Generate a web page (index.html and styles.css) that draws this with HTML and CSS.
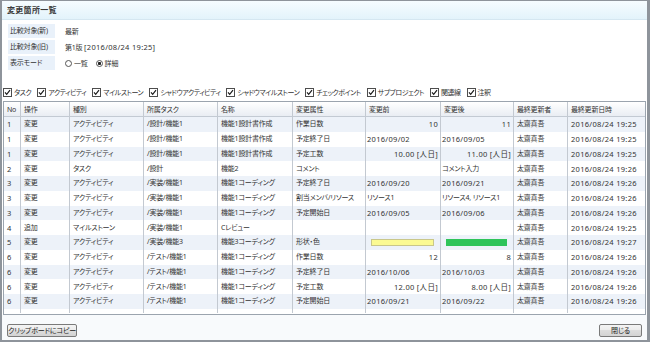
FILE: index.html
```html
<!DOCTYPE html>
<html lang="ja">
<head>
    <meta charset="UTF-8">
    <meta name="viewport" content="width=device-width, initial-scale=1.0">
    <title>変更箇所一覧</title>
    <link rel="stylesheet" href="styles.css">
</head>
<body>
    <div class="window">
        <div class="title">変更箇所一覧</div>

        <div class="info">
            <div class="info-row">
                <span class="info-label">比較対象(新)</span>
                <span class="info-value">最新</span>
            </div>
            <div class="info-row">
                <span class="info-label">比較対象(旧)</span>
                <span class="info-value">第1版 <span class="d">[2016/08/24 19:25]</span></span>
            </div>
            <div class="info-row">
                <span class="info-label">表示モード</span>
                <span class="info-value modes">
                    <label class="radio"><span class="radio-dot"></span>一覧</label>
                    <label class="radio"><span class="radio-dot on"></span>詳細</label>
                </span>
            </div>
        </div>

        <div class="filters">
            <label class="check"><svg width="9" height="9" viewBox="0 0 9 9"><rect x="0.5" y="0.5" width="8" height="8" fill="#fff" stroke="#4d4d4d"/><path d="M2 4.3 L3.7 6.3 L7 2.2" fill="none" stroke="#1a1a1a" stroke-width="1.2"/></svg>タスク</label>
            <label class="check"><svg width="9" height="9" viewBox="0 0 9 9"><rect x="0.5" y="0.5" width="8" height="8" fill="#fff" stroke="#4d4d4d"/><path d="M2 4.3 L3.7 6.3 L7 2.2" fill="none" stroke="#1a1a1a" stroke-width="1.2"/></svg>アクティビティ</label>
            <label class="check"><svg width="9" height="9" viewBox="0 0 9 9"><rect x="0.5" y="0.5" width="8" height="8" fill="#fff" stroke="#4d4d4d"/><path d="M2 4.3 L3.7 6.3 L7 2.2" fill="none" stroke="#1a1a1a" stroke-width="1.2"/></svg>マイルストーン</label>
            <label class="check"><svg width="9" height="9" viewBox="0 0 9 9"><rect x="0.5" y="0.5" width="8" height="8" fill="#fff" stroke="#4d4d4d"/><path d="M2 4.3 L3.7 6.3 L7 2.2" fill="none" stroke="#1a1a1a" stroke-width="1.2"/></svg>シャドウアクティビティ</label>
            <label class="check"><svg width="9" height="9" viewBox="0 0 9 9"><rect x="0.5" y="0.5" width="8" height="8" fill="#fff" stroke="#4d4d4d"/><path d="M2 4.3 L3.7 6.3 L7 2.2" fill="none" stroke="#1a1a1a" stroke-width="1.2"/></svg>シャドウマイルストーン</label>
            <label class="check"><svg width="9" height="9" viewBox="0 0 9 9"><rect x="0.5" y="0.5" width="8" height="8" fill="#fff" stroke="#4d4d4d"/><path d="M2 4.3 L3.7 6.3 L7 2.2" fill="none" stroke="#1a1a1a" stroke-width="1.2"/></svg>チェックポイント</label>
            <label class="check"><svg width="9" height="9" viewBox="0 0 9 9"><rect x="0.5" y="0.5" width="8" height="8" fill="#fff" stroke="#4d4d4d"/><path d="M2 4.3 L3.7 6.3 L7 2.2" fill="none" stroke="#1a1a1a" stroke-width="1.2"/></svg>サブプロジェクト</label>
            <label class="check"><svg width="9" height="9" viewBox="0 0 9 9"><rect x="0.5" y="0.5" width="8" height="8" fill="#fff" stroke="#4d4d4d"/><path d="M2 4.3 L3.7 6.3 L7 2.2" fill="none" stroke="#1a1a1a" stroke-width="1.2"/></svg>関連線</label>
            <label class="check"><svg width="9" height="9" viewBox="0 0 9 9"><rect x="0.5" y="0.5" width="8" height="8" fill="#fff" stroke="#4d4d4d"/><path d="M2 4.3 L3.7 6.3 L7 2.2" fill="none" stroke="#1a1a1a" stroke-width="1.2"/></svg>注釈</label>
        </div>

        <div class="grid">
            <table>
                <colgroup>
                    <col class="c-no">
                    <col class="c-op">
                    <col class="c-kind">
                    <col class="c-task">
                    <col class="c-name">
                    <col class="c-attr">
                    <col class="c-before">
                    <col class="c-after">
                    <col class="c-user">
                    <col>
                </colgroup>
                <thead>
                    <tr>
                        <th>No</th><th>操作</th><th>種別</th><th>所属タスク</th><th>名称</th>
                        <th>変更属性</th><th>変更前</th><th>変更後</th><th>最終更新者</th><th>最終更新日時</th>
                    </tr>
                </thead>
                <tbody>
                    <tr><td class="d">1</td><td>変更</td><td>アクティビティ</td><td>/設計/機能1</td><td>機能1設計書作成</td><td>作業日数</td><td class="val num d">10</td><td class="val num d">11</td><td>太齋真吾</td><td class="d">2016/08/24 19:25</td></tr>
                    <tr><td class="d">1</td><td>変更</td><td>アクティビティ</td><td>/設計/機能1</td><td>機能1設計書作成</td><td>予定終了日</td><td class="val d">2016/09/02</td><td class="val d">2016/09/05</td><td>太齋真吾</td><td class="d">2016/08/24 19:25</td></tr>
                    <tr><td class="d">1</td><td>変更</td><td>アクティビティ</td><td>/設計/機能1</td><td>機能1設計書作成</td><td>予定工数</td><td class="val num d">10.00 [人日]</td><td class="val num d">11.00 [人日]</td><td>太齋真吾</td><td class="d">2016/08/24 19:25</td></tr>
                    <tr><td class="d">2</td><td>変更</td><td>タスク</td><td>/設計</td><td>機能2</td><td>コメント</td><td class="val"></td><td class="val">コメント入力</td><td>太齋真吾</td><td class="d">2016/08/24 19:26</td></tr>
                    <tr><td class="d">3</td><td>変更</td><td>アクティビティ</td><td>/実装/機能1</td><td>機能1コーディング</td><td>予定終了日</td><td class="val d">2016/09/20</td><td class="val d">2016/09/21</td><td>太齋真吾</td><td class="d">2016/08/24 19:26</td></tr>
                    <tr><td class="d">3</td><td>変更</td><td>アクティビティ</td><td>/実装/機能1</td><td>機能1コーディング</td><td>割当メンバ/リソース</td><td class="val">リソース1</td><td class="val">リソース4, リソース1</td><td>太齋真吾</td><td class="d">2016/08/24 19:26</td></tr>
                    <tr><td class="d">3</td><td>変更</td><td>アクティビティ</td><td>/実装/機能1</td><td>機能1コーディング</td><td>予定開始日</td><td class="val d">2016/09/05</td><td class="val d">2016/09/06</td><td>太齋真吾</td><td class="d">2016/08/24 19:26</td></tr>
                    <tr><td class="d">4</td><td>追加</td><td>マイルストーン</td><td>/実装/機能1</td><td>Cレビュー</td><td></td><td class="val"></td><td class="val"></td><td>太齋真吾</td><td class="d">2016/08/24 19:25</td></tr>
                    <tr><td class="d">5</td><td>変更</td><td>アクティビティ</td><td>/実装/機能3</td><td>機能3コーディング</td><td>形状・色</td><td class="val"><div class="swatch yellow"></div></td><td class="val"><div class="swatch green"></div></td><td>太齋真吾</td><td class="d">2016/08/24 19:27</td></tr>
                    <tr><td class="d">6</td><td>変更</td><td>アクティビティ</td><td>/テスト/機能1</td><td>機能1コーディング</td><td>作業日数</td><td class="val num d">12</td><td class="val num d">8</td><td>太齋真吾</td><td class="d">2016/08/24 19:26</td></tr>
                    <tr><td class="d">6</td><td>変更</td><td>アクティビティ</td><td>/テスト/機能1</td><td>機能1コーディング</td><td>予定終了日</td><td class="val d">2016/10/06</td><td class="val d">2016/10/03</td><td>太齋真吾</td><td class="d">2016/08/24 19:26</td></tr>
                    <tr><td class="d">6</td><td>変更</td><td>アクティビティ</td><td>/テスト/機能1</td><td>機能1コーディング</td><td>予定工数</td><td class="val num d">12.00 [人日]</td><td class="val num d">8.00 [人日]</td><td>太齋真吾</td><td class="d">2016/08/24 19:26</td></tr>
                    <tr><td class="d">6</td><td>変更</td><td>アクティビティ</td><td>/テスト/機能1</td><td>機能1コーディング</td><td>予定開始日</td><td class="val d">2016/09/21</td><td class="val d">2016/09/22</td><td>太齋真吾</td><td class="d">2016/08/24 19:26</td></tr>
                    <tr class="fill"><td></td><td></td><td></td><td></td><td></td><td></td><td></td><td></td><td></td><td></td></tr>
                </tbody>
            </table>
        </div>

        <div class="footer">
            <button class="copy">クリップボードにコピー</button>
            <button class="close">閉じる</button>
        </div>
    </div>
</body>
</html>
```

FILE: styles.css
```css
body {
    margin: 0;
    background-color: #fff;
    font-family: "Noto Sans", "Noto Sans CJK JP", sans-serif;
    font-size: 7px;
    letter-spacing: -0.2px;
    font-feature-settings: "palt";
    color: #333;
}

/* dates and numbers: Latin glyphs run wider than the kana */
.d {
    font-size: 7.5px;
    letter-spacing: 0.3px;
}

.window {
    width: 650px;
    height: 342px;
    box-sizing: border-box;
    border-style: solid;
    border-color: #8e949b;
    border-width: 1px 3px 2px 2px;
    display: flex;
    flex-direction: column;
}

.title {
    height: 18px;
    line-height: 18px;
    padding-left: 5px;
    font-size: 8px;
    font-weight: bold;
    letter-spacing: 0.3px;
    color: #3a3a3a;
    background: linear-gradient(#f6fcff, #e3f3fb);
    border-bottom: 1px solid #d5e7f1;
}

.info {
    display: flex;
    flex-direction: column;
    gap: 2px;
    padding: 4px 0 4px 6px;
}

.info-row {
    display: flex;
    align-items: center;
    height: 14px;
}

.info-label {
    width: 47px;
    height: 14px;
    line-height: 14px;
    padding-left: 2px;
    box-sizing: border-box;
    background-color: #e9f1fa;
}

.info-value {
    margin-left: 10px;
}

.modes {
    display: flex;
    gap: 8px;
}

.radio {
    display: flex;
    align-items: center;
    gap: 2px;
}

.radio-dot {
    width: 7px;
    height: 7px;
    box-sizing: border-box;
    border: 1px solid #555;
    border-radius: 50%;
    background: #fff;
}

.radio-dot.on {
    background: radial-gradient(circle, #222 1.3px, #fff 1.9px);
}

.filters {
    display: flex;
    align-items: center;
    gap: 6px;
    height: 12px;
    margin-top: 12px;
    padding-left: 1px;
}

.check {
    display: flex;
    align-items: center;
    gap: 2px;
    letter-spacing: -0.5px;
}

.check svg {
    display: block;
}

.grid {
    height: 214px;
    box-sizing: border-box;
    margin: 3px 1px 0;
    border: 1px solid #9ba4ae;
    overflow: hidden;
}

table {
    width: 100%;
    table-layout: fixed;
    border-collapse: separate;
    border-spacing: 0;
}

.c-no { width: 17px; }
.c-op { width: 49px; }
.c-kind { width: 74px; }
.c-task { width: 74px; }
.c-name { width: 75px; }
.c-attr { width: 73px; }
.c-before { width: 75px; }
.c-after { width: 73px; }
.c-user { width: 54px; }

th, td {
    padding: 0 3px;
    text-align: left;
    font-weight: normal;
    white-space: nowrap;
    overflow: hidden;
    border-right: 1px solid #c3c9d1;
}

th:last-child, td:last-child {
    border-right: none;
}

th {
    height: 15px;
    box-sizing: border-box;
    color: #333;
    background: linear-gradient(#ffffff, #e9edf3);
    border-bottom: 1px solid #c3cad3;
}

td {
    height: 14.75px;
    line-height: 14px;
}

tbody tr:nth-child(odd) {
    background-color: #edf2f9;
}

tbody tr.fill {
    background-color: #fff;
}

tr.fill td {
    height: 4.25px;
}

td.val {
    padding: 0 2px 0 1px;
}

td.num {
    text-align: right;
}

.swatch {
    height: 7px;
    margin: 0 4px;
    box-sizing: border-box;
}

.swatch.yellow {
    background-color: #fbfa93;
    border: 1px solid #c9c78a;
}

.swatch.green {
    background-color: #2fc45a;
}

.footer {
    flex: 1;
    display: flex;
    justify-content: space-between;
    align-items: center;
    padding: 6px 5px 0;
    background-color: #f8fafc;
}

button {
    height: 13px;
    padding: 0;
    font: inherit;
    letter-spacing: -0.2px;
    line-height: 11px;
    white-space: nowrap;
    color: #222;
    border: 1px solid #7a7a7a;
    border-radius: 2px;
    background: linear-gradient(#f4f4f4, #ebebeb 50%, #dddddd 50%, #d3d3d3);
}

.copy {
    width: 70px;
}

.close {
    width: 43px;
}
```
